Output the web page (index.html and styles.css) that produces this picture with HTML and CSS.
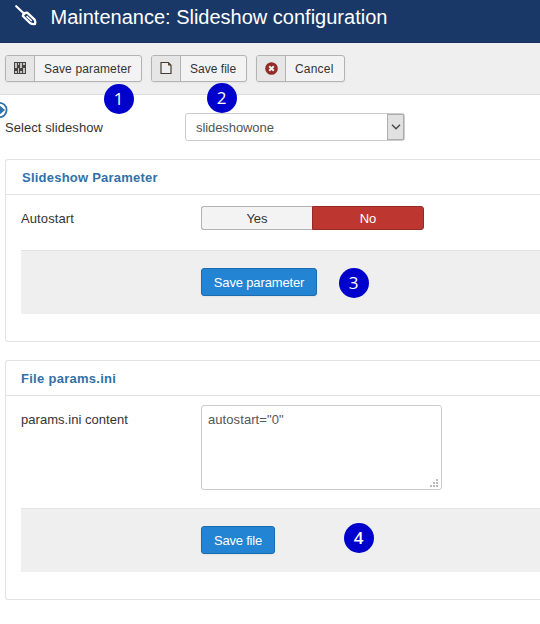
FILE: index.html
```
<!DOCTYPE html>
<html lang="en">
<head>
<meta charset="utf-8">
<title>Maintenance: Slideshow configuration</title>
<link rel="stylesheet" href="styles.css">
</head>
<body>
<header class="header">
  <svg class="tool-icon" width="24" height="24" viewBox="0 0 24 24"><path d="M2.2 2.2 10.5 10" stroke="#fff" stroke-width="2.2" stroke-linecap="round"/><path d="M8.8 12Q9.5 8.4 13.2 8.6L20.6 15.6Q21.8 18 21 20Q18.5 20.6 16 19Z" fill="none" stroke="#fff" stroke-width="2.3" stroke-linejoin="round"/><path d="M12.6 12.2 17.8 17" stroke="#fff" stroke-width="1.6"/></svg>
  <h1 class="page-title">Maintenance: Slideshow configuration</h1>
</header>
<nav class="toolbar">
  <button class="tool tool-param"><span class="tool-glyph"><svg width="12" height="12" viewBox="0 0 12 12"><path d="M0 0H12V12H0Z" fill="#444"/><path d="M1 1h2v5h-2zM1 9h2v2h-2zM4 1h1v2h-1zM4 6h1v5h-1zM6 1h2v5h-2zM6 9h2v2h-2zM9 1h2v2h-2zM9 6h2v5h-2z" fill="#c8c3bd"/></svg></span><span class="tool-label"><span>Save parameter</span></span></button>
  <button class="tool tool-file"><span class="tool-glyph"><svg width="12" height="12" viewBox="0 0 12 12"><path d="M1 .5H8.2L11 3.3V11.5H1Z" fill="#eee" stroke="#443c36" stroke-width="1.2"/><path d="M8 .5V3.5H11Z" fill="#5d4736"/></svg></span><span class="tool-label"><span>Save file</span></span></button>
  <button class="tool tool-cancel"><span class="tool-glyph"><svg width="13" height="13" viewBox="0 0 13 13"><circle cx="6.5" cy="6.5" r="6.3" fill="#942a25"/><path d="M4.2 4.2 8.8 8.8M8.8 4.2 4.2 8.8" stroke="#eee" stroke-width="2"/></svg></span><span class="tool-label"><span>Cancel</span></span></button>
</nav>
<svg class="sidebar-toggle" width="8" height="18" viewBox="0 0 8 18"><circle cx="-.5" cy="9" r="7.1" fill="none" stroke="#3071a9" stroke-width="1.8"/><path d="M-1 4 5 9-1 14Z" fill="#3071a9"/></svg>
<main class="content">
  <div class="field select-field">
    <label class="label select-label">Select slideshow</label>
    <div class="select"><span class="select-value">slideshowone</span><span class="select-arrow"><svg width="10" height="6" viewBox="0 0 10 6"><path d="M1 .8 5 4.8 9 .8" fill="none" stroke="#444" stroke-width="1.3"/></svg></span></div>
  </div>
  <section class="panel">
    <h2 class="panel-title">Slideshow Parameter</h2>
    <div class="panel-body">
      <div class="field auto-field">
        <span class="label auto-label">Autostart</span>
        <div class="switch"><button class="yes">Yes</button><button class="no">No</button></div>
      </div>
      <div class="actions"><button class="primary primary-param"><span>Save parameter</span></button></div>
    </div>
  </section>
  <section class="panel file-panel">
    <h2 class="panel-title file-title">File params.ini</h2>
    <div class="panel-body">
      <div class="field text-field">
        <label class="label params-label">params.ini content</label>
        <div class="textarea"><span class="text-value">autostart="0"</span><svg class="grip" width="8" height="8" viewBox="0 0 8 8"><path d="M6 0h2v2h-2zM3 3h2v2h-2zM6 3h2v2h-2zM0 6h2v2h-2zM3 6h2v2h-2zM6 6h2v2h-2z" fill="#bbb"/></svg></div>
      </div>
      <div class="actions"><button class="primary primary-file"><span>Save file</span></button></div>
    </div>
  </section>
</main>
<span class="badge badge-1">1</span>
<span class="badge badge-2">2</span>
<span class="badge badge-3">3</span>
<span class="badge badge-4">4</span>
</body>
</html>
```
FILE: styles.css
```
* { box-sizing: border-box; }
body {
  margin: 0;
  height: 624px;
  position: relative;
  overflow: hidden;
  background: #fff;
  color: #333;
  font: 13px/18px "Liberation Sans", Arial, sans-serif;
}
button { font: inherit; padding: 0; margin: 0; }
svg { display: block; }
.header {
  height: 43px;
  background: #1a3867;
  border-bottom: 1px solid #17325d;
  display: flex;
  padding: 4px 0 0 14px;
}
.page-title {
  margin: 0 0 0 12.5px;
  color: #fff;
  font-size: 20px;
  line-height: 26px;
  font-weight: 400;
  white-space: nowrap;
}
.toolbar {
  height: 52px;
  padding: 12px 5px 0;
  background: #efefef;
  border-bottom: 1px solid #dcdcdc;
  display: flex;
  gap: 9px;
}
.tool {
  height: 27px;
  display: flex;
  border: 1px solid #b3b3b3;
  border-radius: 3px;
  background: #f3f3f3;
  color: #333;
  font-size: 12px;
  box-shadow: 0 1px 2px rgba(0, 0, 0, .05);
  overflow: hidden;
}
.tool-param { width: 137px; letter-spacing: .14px; }
.tool-file { width: 96px; letter-spacing: .02px; }
.tool-cancel { width: 89px; letter-spacing: .2px; }
.tool-glyph {
  width: 29px;
  height: 25px;
  padding-bottom: 1px;
  background: #e6e6e6;
  border-right: 1px solid #b3b3b3;
  display: flex;
  align-items: center;
  justify-content: center;
}
.tool-label { padding-left: 9px; line-height: 26px; white-space: nowrap; }
.sidebar-toggle { position: absolute; left: 0; top: 101px; }
.content { padding: 18px 0 0 5px; }
.field { display: flex; }
.label { width: 180px; padding-top: 5px; }
.select-label { padding-top: 6px; letter-spacing: .07px; }
.select-field { height: 28px; }
.select {
  width: 220px;
  height: 28px;
  border: 1px solid #ccc;
  border-radius: 3px;
  display: flex;
  justify-content: space-between;
  color: #555;
}
.select-value { padding-left: 10px; line-height: 27px; letter-spacing: -.08px; }
.select-arrow {
  width: 17px;
  border: 1px solid #adadad;
  background: #e1e1e1;
  display: flex;
  align-items: center;
  justify-content: center;
}
.panel {
  height: 183px;
  margin-top: 18px;
  border: 1px solid #e3e3e3;
  border-right: 0;
  border-radius: 3px 0 0 3px;
}
.file-panel { height: 240px; }
.panel-title {
  margin: 0;
  height: 35px;
  padding-left: 16px;
  border-bottom: 1px solid #e3e3e3;
  color: #3071a9;
  font-size: 13px;
  line-height: 35px;
  font-weight: 700;
  letter-spacing: .23px;
}
.file-title { padding-left: 15px; letter-spacing: .28px; }
.panel-body { padding-left: 15px; }
.auto-field { height: 55px; padding-top: 11px; }
.auto-label { padding-top: 4px; letter-spacing: .1px; }
.switch { display: flex; height: 24px; width: 223px; }
.yes, .no { border: 1px solid #b3b3b3; line-height: 24px; }
.yes { width: 111px; border-right: 0; border-radius: 3px 0 0 3px; background: #f3f3f3; color: #333; }
.no { width: 112px; border-color: #942a25; border-radius: 0 3px 3px 0; background: #bd362f; color: #fff; }
.actions {
  height: 64px;
  padding: 17px 0 0 180px;
  border-top: 1px solid #e3e3e3;
  background: #efefef;
}
.primary {
  height: 28px;
  display: block;
  padding-top: 1px;
  border: 1px solid #1a6caf;
  border-radius: 3px;
  background: #2384d3;
  color: #fff;
  line-height: 26px;
  letter-spacing: -.15px;
  white-space: nowrap;
  box-shadow: 0 1px 2px rgba(0, 0, 0, .05);
}
.primary-param { width: 116px; }
.primary-file { width: 74px; letter-spacing: -.2px; }
.text-field { height: 112px; padding-top: 9px; }
.params-label { padding-top: 6px; letter-spacing: .04px; }
.textarea {
  position: relative;
  width: 241px;
  height: 85px;
  padding: 5px 6px;
  border: 1px solid #ccc;
  border-radius: 3px;
  color: #555;
}
.text-value { letter-spacing: .08px; }
.grip { position: absolute; right: 3px; bottom: 2px; }
.badge {
  position: absolute;
  width: 30px;
  height: 30px;
  border-radius: 50%;
  background: #0000cd;
  color: #fff;
  font: 17px/30px "Open Sans", sans-serif;
  text-align: center;
}
.badge-1 { left: 103.5px; top: 83.5px; font-weight: 500; }
.badge-2 { left: 206.5px; top: 82.5px; }
.badge-3 { left: 338.5px; top: 267.5px; }
.badge-4 { left: 343.5px; top: 522.5px; font-weight: 600; }
```
